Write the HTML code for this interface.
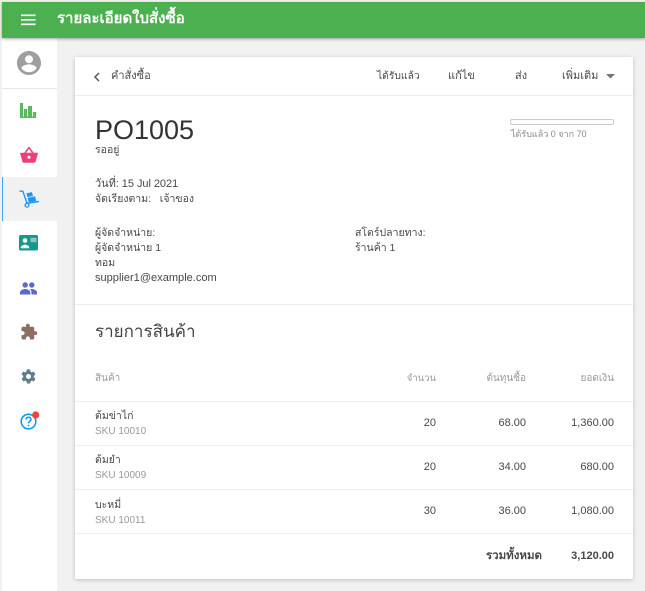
<!DOCTYPE html>
<html><head><meta charset="utf-8">
<style>
html,body{margin:0;padding:0;width:645px;height:591px;overflow:hidden;background:#f1f1f1;}
body{position:relative;font-family:"Liberation Sans","Noto Sans CJK SC",sans-serif;font-size:11px;color:#484848;}
div,span{position:absolute;white-space:nowrap;}
svg{position:absolute;}
.r{text-align:right;}
.line{height:1px;background:#eee;left:75px;width:558px;}
.g{color:#999;}
.t{line-height:15px;}
</style></head><body>
<div style="left:0;top:0;width:645px;height:2px;background:#f4f4f4"></div>
<div style="left:2px;top:38px;width:55px;height:553px;background:#fff"></div>
<div style="left:2px;top:88px;width:55px;height:1px;background:#e6e6e6"></div>
<div style="left:2px;top:177px;width:55px;height:44px;background:#f1f1f1"></div>
<div style="left:2px;top:177px;width:1px;height:44px;background:#42a5f5"></div>
<div style="left:2px;top:2px;width:643px;height:36px;background:#4caf50;box-shadow:0 1px 3px rgba(0,0,0,.35)"></div>
<svg style="left:21px;top:14px" width="15" height="12" viewBox="0 0 15 12"><path d="M0 0.500h14.500v1.600H0zM0 5h14.500v1.600H0zM0 9.500h14.500v1.600H0z" fill="#fff"/></svg>
<div style="left:57px;top:9px;font-size:15px;line-height:20px;color:#fff;font-weight:bold">รายละเอียดใบสั่งซื้อ</div>

<svg style="left:17px;top:51px" width="24" height="24" viewBox="0 0 24 24"><path fill="#9e9e9e" d="M12 0C5.400 0 0 5.400 0 12s5.400 12 12 12 12-5.400 12-12S18.600 0 12 0zm0 4.200a4 4 0 1 1 0 8 4 4 0 0 1 0-8zm0 17c-3.200 0-6-1.600-7.600-4.100C4.500 14.700 9.300 13.400 12 13.400s7.500 1.300 7.600 3.700c-1.600 2.500-4.400 4.100-7.600 4.100z"/></svg>
<svg style="left:20px;top:103px" width="17" height="16" viewBox="0 0 17 16"><path fill="#5cb860" d="M0 0h3v13.500h13V15H0zM4 6h3.200v7.500H4zM8 3h4v10.500H8zM13 9h3.200v4.500H13z"/></svg>
<svg style="left:20px;top:147px" width="18" height="16" viewBox="0 0 18 16"><path fill="#ec407a" d="M0.500 5.800h3.800L8 0.500c.5-.6 1.500-.6 2 0l3.700 5.300h3.800c.3 0 .5.300.4.600l-2.200 8c-.2.800-.8 1.300-1.600 1.300H3.900c-.8 0-1.400-.5-1.600-1.300l-2.200-8c-.1-.3.100-.6.400-.6zM6.200 5.800h5.600L9 1.800z"/><circle cx="9" cy="10.300" r="1.500" fill="#fff"/></svg>
<svg style="left:19px;top:190px" width="21" height="18" viewBox="0 0 21 18"><path fill="none" stroke="#2196f3" stroke-width="1.400" d="M0.500 1.200h3.300L8 13.200l12-1.700"/><path fill="#2196f3" d="M8.500 8l7.500-1.700 1.200 4.700-7.400 1.300zM7.300 3.400l5.600-1.300 1.100 3.800-5.500 1.300z"/><circle cx="8" cy="15.200" r="1.900" fill="none" stroke="#2196f3" stroke-width="1.300"/></svg>
<svg style="left:19px;top:235px" width="19" height="16" viewBox="0 0 19 16"><rect width="19" height="15.500" rx="1.500" fill="#159a8a"/><circle cx="6" cy="5.500" r="2.300" fill="#fff"/><path fill="#fff" d="M1.800 12.500c0-1.800 2.800-2.900 4.200-2.900s4.200 1.100 4.200 2.900v.7H1.800z"/><rect x="11.500" y="2.800" width="6" height="4.400" fill="#80cbc4"/></svg>
<svg style="left:20px;top:282px" width="17" height="13" viewBox="0 0 17 13"><circle cx="5.200" cy="3" r="2.700" fill="#5c6bc0"/><circle cx="11.800" cy="3" r="2.700" fill="#5c6bc0"/><path fill="#5c6bc0" d="M0 12.500v-2C0 8.300 3.400 7 5.200 7s5.200 1.300 5.200 3.500v2zM11.500 12.500v-2c0-1.300-.6-2.400-1.600-3.200.7-.2 1.400-.3 1.900-.3 1.800 0 5.200 1.300 5.200 3.500v2z"/></svg>
<svg style="left:20px;top:323px" width="18" height="18" viewBox="0 0 24 24"><path fill="#8d6e63" d="M20.500 11H19V7c0-1.100-.9-2-2-2h-4V3.500a2.500 2.500 0 0 0-5 0V5H4c-1.100 0-2 .9-2 2v3.800h1.500c1.500 0 2.700 1.200 2.700 2.700S5 16.200 3.500 16.200H2V20c0 1.100.9 2 2 2h3.800v-1.500c0-1.500 1.200-2.700 2.700-2.700s2.700 1.200 2.700 2.700V22H17c1.100 0 2-.9 2-2v-4h1.500a2.500 2.500 0 0 0 0-5z"/></svg>
<svg style="left:20px;top:368px" width="17" height="17" viewBox="0 0 24 24"><path fill="#607d8b" d="M19.400 13c0-.3.100-.6.100-1s0-.7-.1-1l2.100-1.600c.2-.2.200-.4.100-.6l-2-3.500c-.1-.2-.4-.3-.6-.2l-2.500 1c-.5-.4-1.100-.7-1.700-1l-.4-2.600c0-.3-.2-.5-.5-.5h-4c-.3 0-.5.200-.5.400l-.4 2.700c-.6.200-1.100.6-1.700 1l-2.500-1c-.2-.1-.5 0-.6.200l-2 3.500c-.1.200-.1.500.1.600L4.600 11c0 .3-.1.600-.1 1s0 .7.100 1l-2.100 1.600c-.2.200-.2.400-.1.600l2 3.500c.1.200.4.300.6.200l2.500-1c.5.400 1.100.7 1.700 1l.4 2.600c0 .3.200.4.500.4h4c.3 0 .5-.2.500-.4l.4-2.600c.6-.3 1.200-.6 1.700-1l2.500 1c.2.100.5 0 .6-.2l2-3.500c.1-.2.100-.5-.1-.6zM12 15.500a3.500 3.500 0 1 1 0-7 3.500 3.500 0 0 1 0 7z"/></svg>
<svg style="left:20px;top:410px" width="20" height="22" viewBox="0 0 20 22"><circle cx="8.500" cy="11.500" r="7.300" fill="none" stroke="#039be5" stroke-width="1.500"/><path fill="none" stroke="#039be5" stroke-width="1.500" d="M6 9.500c0-1.400 1.100-2.300 2.500-2.300s2.500.9 2.500 2.200c0 1.800-2.500 1.900-2.500 3.900"/><circle cx="8.500" cy="15.500" r=".9" fill="#039be5"/><circle cx="15.700" cy="5" r="3.600" fill="#f44336"/></svg>

<div style="left:75px;top:57px;width:558px;height:522px;background:#fff;box-shadow:0 1px 4px rgba(0,0,0,.22)"></div>
<svg style="left:93px;top:72px" width="8" height="10" viewBox="0 0 8 10"><path d="M6 1L2 5l4 4" fill="none" stroke="#555" stroke-width="1.500"/></svg>
<div class="t" style="left:111px;top:69px">คำสั่งซื้อ</div>
<div class="t" style="left:377px;top:69px;font-size:10.300px">ได้รับแล้ว</div>
<div class="t" style="left:448px;top:69px">แก้ไข</div>
<div class="t" style="left:515px;top:69px">ส่ง</div>
<div class="t" style="left:562px;top:69px">เพิ่มเติม</div>
<svg style="left:606px;top:74px" width="9" height="5" viewBox="0 0 9 5"><path d="M0 0h9L4.500 4.500z" fill="#777"/></svg>
<div class="line" style="top:95px"></div>

<div style="left:95px;top:114px;font-size:27px;line-height:32px;color:#333">PO1005</div>
<div class="t" style="left:95px;top:143px;font-size:10.500px">รออยู่</div>
<div style="left:510px;top:119px;width:102px;height:4px;border:1px solid #ccc;border-radius:2px;background:#fff"></div>
<div class="t" style="left:511px;top:127px;font-size:9px;color:#888">ได้รับแล้ว 0 จาก 70</div>
<div class="t" style="left:95px;top:177px;font-size:11px;letter-spacing:-.05px">วันที่: 15 Jul 2021</div>
<div class="t" style="left:95px;top:192px;font-size:10.500px">จัดเรียงตาม:&nbsp;&nbsp; เจ้าของ</div>
<div class="t" style="left:95px;top:226px;font-size:10.500px">ผู้จัดจำหน่าย:</div>
<div class="t" style="left:95px;top:241px;font-size:10.500px">ผู้จัดจำหน่าย 1</div>
<div class="t" style="left:95px;top:256px;font-size:10.500px">ทอม</div>
<div class="t" style="left:95px;top:271px;font-size:11.050px">supplier1@example.com</div>
<div class="t" style="left:355px;top:226px;font-size:10.500px">สโตร์ปลายทาง:</div>
<div class="t" style="left:355px;top:241px;font-size:10.500px">ร้านค้า 1</div>
<div class="line" style="top:304px"></div>

<div style="left:95px;top:320px;font-size:17px;line-height:24px;color:#444">รายการสินค้า</div>
<div class="t g" style="left:95px;top:371px;font-size:10px">สินค้า</div>
<div class="t g r" style="left:376px;width:60px;top:371px;font-size:9.500px">จำนวน</div>
<div class="t g r" style="left:466px;width:60px;top:371px;font-size:10px">ต้นทุนซื้อ</div>
<div class="t g r" style="left:554px;width:60px;top:371px;font-size:10px">ยอดเงิน</div>
<div class="line" style="top:401px"></div>

<div class="t" style="left:95px;top:409px;font-size:10.500px">ต้มข่าไก่</div>
<div class="t g" style="left:95px;top:424px;font-size:10px">SKU 10010</div>
<div class="t r" style="left:376px;width:60px;top:416px">20</div>
<div class="t r" style="left:466px;width:60px;top:416px">68.00</div>
<div class="t r" style="left:554px;width:60px;top:416px">1,360.00</div>
<div class="line" style="top:445px"></div>

<div class="t" style="left:95px;top:453px;font-size:10.500px">ต้มยำ</div>
<div class="t g" style="left:95px;top:468px;font-size:10px">SKU 10009</div>
<div class="t r" style="left:376px;width:60px;top:460px">20</div>
<div class="t r" style="left:466px;width:60px;top:460px">34.00</div>
<div class="t r" style="left:554px;width:60px;top:460px">680.00</div>
<div class="line" style="top:489px"></div>

<div class="t" style="left:95px;top:498px;font-size:10.500px">บะหมี่</div>
<div class="t g" style="left:95px;top:513px;font-size:10px">SKU 10011</div>
<div class="t r" style="left:376px;width:60px;top:504px">30</div>
<div class="t r" style="left:466px;width:60px;top:504px">36.00</div>
<div class="t r" style="left:554px;width:60px;top:504px">1,080.00</div>
<div class="line" style="top:533px"></div>

<div class="t r" style="left:442px;width:100px;top:549px;font-size:11.500px;font-weight:bold">รวมทั้งหมด</div>
<div class="t r" style="left:554px;width:60px;top:549px;font-weight:bold">3,120.00</div>
</body></html>
